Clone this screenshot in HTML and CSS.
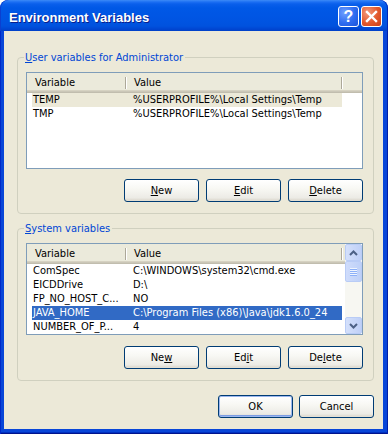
FILE: index.html
```html
<!DOCTYPE html>
<html>
<head>
<meta charset="utf-8">
<title>Environment Variables</title>
<link rel="stylesheet" href="styles.css">
</head>
<body>
<div class="window">
  <div class="titlebar">
    <span class="title">Environment Variables</span>
    <div class="caption-buttons">
      <span class="cap-btn help">?</span>
      <span class="cap-btn close">
        <svg width="13" height="13" viewBox="0 0 13 13"><path d="M2 2 L11 11 M11 2 L2 11" stroke="#fff" stroke-width="2.4" stroke-linecap="square"/></svg>
      </span>
    </div>
  </div>
  <div class="frame">
    <div class="client">
      <fieldset class="group group-user">
        <legend><u>U</u>ser variables for Administrator</legend>
        <div class="listview list-user">
          <div class="lv-main">
            <div class="lv-header">
              <div class="hcell col1">Variable</div>
              <div class="hcell col2">Value</div>
            </div>
            <div class="lv-row sel-inactive"><span class="cell c1">TEMP</span><span class="cell c2">%USERPROFILE%\Local Settings\Temp</span></div>
            <div class="lv-row"><span class="cell c1">TMP</span><span class="cell c2">%USERPROFILE%\Local Settings\Temp</span></div>
          </div>
        </div>
        <div class="btn-row">
          <button class="btn"><u>N</u>ew</button>
          <button class="btn"><u>E</u>dit</button>
          <button class="btn"><u>D</u>elete</button>
        </div>
      </fieldset>

      <fieldset class="group group-system">
        <legend><u>S</u>ystem variables</legend>
        <div class="listview list-system">
          <div class="lv-main">
            <div class="lv-header">
              <div class="hcell col1">Variable</div>
              <div class="hcell col2">Value</div>
            </div>
            <div class="lv-row"><span class="cell c1">ComSpec</span><span class="cell c2">C:\WINDOWS\system32\cmd.exe</span></div>
            <div class="lv-row"><span class="cell c1">EICDDrive</span><span class="cell c2">D:\</span></div>
            <div class="lv-row"><span class="cell c1">FP_NO_HOST_C...</span><span class="cell c2">NO</span></div>
            <div class="lv-row sel"><span class="cell c1">JAVA_HOME</span><span class="cell c2">C:\Program Files (x86)\Java\jdk1.6.0_24</span></div>
            <div class="lv-row"><span class="cell c1">NUMBER_OF_P...</span><span class="cell c2">4</span></div>
          </div>
          <div class="scrollbar">
            <div class="sb-btn">
              <svg width="9" height="6" viewBox="0 0 9 6"><path d="M1 5 L4.5 1.5 L8 5" fill="none" stroke="#4D6185" stroke-width="2"/></svg>
            </div>
            <div class="sb-track">
              <div class="sb-thumb">
                <span class="grip"></span><span class="grip"></span><span class="grip"></span><span class="grip"></span>
              </div>
            </div>
            <div class="sb-btn">
              <svg width="9" height="6" viewBox="0 0 9 6"><path d="M1 1 L4.5 4.5 L8 1" fill="none" stroke="#4D6185" stroke-width="2"/></svg>
            </div>
          </div>
        </div>
        <div class="btn-row">
          <button class="btn">Ne<u>w</u></button>
          <button class="btn">Ed<u>i</u>t</button>
          <button class="btn">De<u>l</u>ete</button>
        </div>
      </fieldset>

      <div class="dialog-buttons">
        <button class="btn default">OK</button>
        <button class="btn">Cancel</button>
      </div>
    </div>
  </div>
</div>
</body>
</html>
```

FILE: styles.css
```css
* { box-sizing: border-box; }

html, body {
  margin: 0;
  padding: 0;
  background: #ffffff;
}

body {
  font-family: "DejaVu Sans Condensed", "DejaVu Sans", sans-serif;
  font-stretch: condensed;
  font-size: 11px;
  color: #000;
}

.window {
  width: 388px;
  height: 434px;
  display: flex;
  flex-direction: column;
  border-radius: 8px 8px 0 0;
  overflow: hidden;
  background: #0846D8;
}

.titlebar {
  height: 31px;
  flex: none;
  display: flex;
  align-items: center;
  justify-content: space-between;
  padding: 0 6px 0 9px;
  background: linear-gradient(to bottom,
    #3D8AF7 0px, #1C6FF3 2px, #0A5FEB 4px, #0058E6 8px,
    #0055E3 18px, #0052DE 26px, #0046D2 29px, #0040C8 31px);
  border-radius: 8px 8px 0 0;
  box-shadow: inset 1px 0 #0B3FD0, inset -1px 0 #0027B8;
}

.title {
  font-family: "Liberation Sans", Arial, sans-serif;
  font-stretch: normal;
  font-weight: bold;
  font-size: 13px;
  color: #fff;
  text-shadow: 1px 1px #0A1E8C;
  padding-top: 4px;
}

.caption-buttons {
  display: flex;
  gap: 2px;
  padding-top: 1px;
}

.cap-btn {
  width: 21px;
  height: 21px;
  border: 1px solid #fff;
  border-radius: 3px;
  display: flex;
  align-items: center;
  justify-content: center;
}

.help {
  background: radial-gradient(circle at 30% 30%, #6FA0FF 0, #2E6CF0 55%, #1A54DA 100%);
  color: #fff;
  font-family: "Liberation Sans", Arial, sans-serif;
  font-stretch: normal;
  font-weight: bold;
  font-size: 16px;
  line-height: 19px;
}

.close {
  background: radial-gradient(circle at 30% 30%, #F39A7C 0, #E2582C 55%, #C8401A 100%);
}

.frame {
  flex: 1;
  display: flex;
  padding: 0 5px 5px 4px;
  background: #0846D8;
  box-shadow: inset 1px 0 #0029C8, inset -1px 0 #001EA8, inset 0 -1px #00138C, inset 0 -2px #0030C0;
}

.client {
  flex: 1;
  background: #ECE9D8;
  padding: 20px 0 0 13px;
  display: flex;
  flex-direction: column;
}

.group {
  width: 357px;
  margin: 0;
  border: 1px solid #D0D0BF;
  border-radius: 4px;
  padding: 8px 10px 11px 8px;
  min-width: 0;
}

.group-system {
  margin-top: 8px;
}

.group legend {
  color: #0046D5;
  line-height: 13px;
  height: 13px;
  padding: 0 2px 0 1px;
  margin-left: -2px;
}

.listview {
  border: 1px solid #7F9DB9;
  background: #fff;
  display: flex;
}

.list-user { height: 97px; }
.list-system { height: 92px; }

.lv-main {
  flex: 1;
  min-width: 0;
}

.lv-header {
  height: 20px;
  display: flex;
  background: #EBEADB;
  box-shadow: inset 0 -1px #C1BDAE, inset 0 -2px #CBC7B8, inset 0 -3px #D6D2C2;
}

.hcell {
  position: relative;
  line-height: 20px;
  padding-left: 8px;
  white-space: nowrap;
}

.hcell::after {
  content: "";
  position: absolute;
  right: 0;
  top: 4px;
  bottom: 4px;
  width: 1px;
  background: #ACA899;
  box-shadow: 1px 0 #fff;
}

.col1 { width: 99px; }
.col2 { width: 216px; }

.lv-row {
  display: flex;
  height: 14px;
  line-height: 14px;
  margin-left: 5px;
  width: 310px;
  white-space: nowrap;
}

.lv-row.sel-inactive {
  background: #ECE9D8;
}

.lv-row.sel {
  background: #316AC5;
  color: #fff;
}

.cell.c1 {
  width: 94px;
  padding-left: 1px;
  overflow: hidden;
}

.cell.c2 {
  padding-left: 7px;
}

.scrollbar {
  width: 17px;
  flex: none;
  display: flex;
  flex-direction: column;
  background: #FBFBF8;
}

.sb-btn {
  height: 17px;
  flex: none;
  border: 1px solid #B9CCF6;
  border-radius: 2px;
  background: linear-gradient(to right, #D4E0FB, #BFD0F7);
  display: flex;
  align-items: center;
  justify-content: center;
}

.sb-track {
  flex: 1;
  background: #F7F7F2;
}

.sb-thumb {
  height: 21px;
  border: 1px solid #B9CCF6;
  border-radius: 2px;
  background: linear-gradient(to right, #CFDCFB, #BDD0F8);
  display: flex;
  flex-direction: column;
  align-items: center;
  justify-content: center;
  gap: 1px;
}

.grip {
  width: 7px;
  height: 1px;
  background: #EEF4FE;
  box-shadow: 0 1px #8CB0F8;
}

.btn-row {
  display: flex;
  justify-content: flex-end;
  gap: 7px;
  margin-top: 10px;
}

.group-system .btn-row {
  margin-top: 11px;
}

.btn {
  width: 75px;
  height: 23px;
  padding: 0;
  margin: 0;
  font-family: inherit;
  font-stretch: condensed;
  font-size: 11px;
  color: #000;
  border: 1px solid #003C74;
  border-radius: 3px;
  background: linear-gradient(to bottom, #FFFFFF 0%, #F8F8F4 40%, #ECEBE5 85%, #D8D3C8 100%);
  box-shadow: inset 0 -1px #E3DFD3;
}

.btn.default {
  box-shadow: inset 0 0 0 1px #9CB7EE, inset 0 -2px #7D9DE3;
}

.dialog-buttons {
  display: flex;
  justify-content: flex-end;
  gap: 6px;
  width: 357px;
  margin-top: 14px;
}
```
